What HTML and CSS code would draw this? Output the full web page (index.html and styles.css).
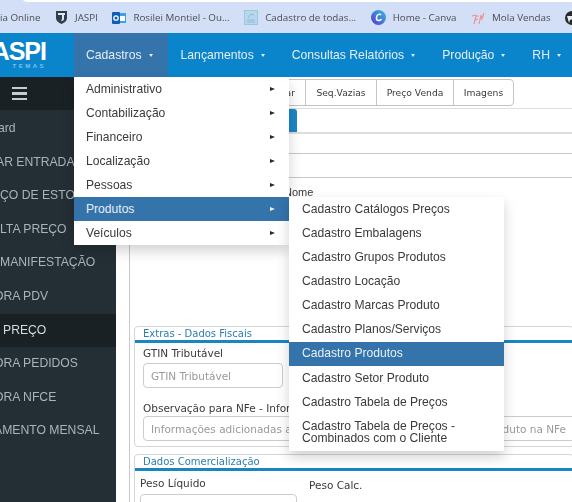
FILE: index.html
```html
<html>
<head>
    <meta charset="UTF-8">
    <title>Cadastro Produtos</title>
    <link rel="stylesheet" href="styles.css">
</head>
<body>
    <div class="bookmarks">
        <div class="urlbar"></div>
        <span class="bm first">ia Online</span>
        <span class="bm">
            <svg width="13" height="15" viewBox="0 0 13 15"><path d="M1 1h11v7c0 3-3 5-5.500 6C4 13 1 11 1 8z" fill="#2f3f4c"/><path d="M3 3h7v2H3z" fill="#dfe8f2"/><path d="M7 5h2v4c0 1-1 2-3 2l1-2z" fill="#dfe8f2"/></svg>
            JASPI
        </span>
        <span class="bm">
            <svg width="14" height="14" viewBox="0 0 14 14"><rect x="6" y="2" width="8" height="10" fill="#3ea0e8"/><rect x="8" y="5" width="5" height="5" fill="#fff"/><rect x="0" y="1" width="8" height="12" rx="1" fill="#0f5fb5"/><circle cx="4" cy="7" r="2.200" fill="none" stroke="#fff" stroke-width="1.300"/></svg>
            Rosilei Montiel - Ou...
        </span>
        <span class="bm">
            <svg width="14" height="15" viewBox="0 0 14 15"><rect x="0.500" y="0.500" width="13" height="14" fill="#b5d8ee" stroke="#9cc6e2"/><path d="M3 10h8M3 12h8M4 8l3-4 3 1" fill="none" stroke="#8fb9d6"/></svg>
            Cadastro de todas...
        </span>
        <span class="bm">
            <svg width="15" height="15" viewBox="0 0 15 15"><defs><linearGradient id="cv" x1="0" y1="1" x2="1" y2="0"><stop offset="0" stop-color="#5a32d6"/><stop offset="1" stop-color="#2fc4d8"/></linearGradient></defs><circle cx="7.500" cy="7.500" r="7.500" fill="url(#cv)"/><path d="M10 5C9 3.500 6 4 5.500 7.500 5 11 8.500 11.500 10.500 9" fill="none" stroke="#fff" stroke-width="1.500"/></svg>
            Home - Canva
        </span>
        <span class="bm">
            <svg width="14" height="14" viewBox="0 0 14 14"><path d="M3 13L5 5M5 5h3M4 9l3-1M8 13l2-9 1 4 2-6M1 5l4-1" fill="none" stroke="#ee8f8c" stroke-width="1.100"/></svg>
            Mola Vendas
        </span>
        <span class="bm">
            <svg width="14" height="14" viewBox="0 0 14 14"><circle cx="7" cy="7" r="7" fill="#2a2a2a"/><path d="M2 5h5l1 3-3 1-1 3M9 2l3 3-3 1" fill="#e8ecf6"/></svg>
        </span>
    </div>

    <div class="navbar">
        <div class="logo">
            <div class="logo-name">ASPI</div>
            <div class="logo-sub">TEMAS</div>
        </div>
        <div class="nav-item active">Cadastros <i class="caret"></i></div>
        <div class="nav-item">Lançamentos <i class="caret"></i></div>
        <div class="nav-item">Consultas Relatórios <i class="caret"></i></div>
        <div class="nav-item">Produção <i class="caret"></i></div>
        <div class="nav-item">RH <i class="caret"></i></div>
    </div>

    <div class="wrap">
        <div class="sidebar">
            <div class="side-head"><div class="burger"><span></span><span></span><span></span></div></div>
            <div class="side-item cut2">ard</div>
            <div class="side-item cut4">AR ENTRADA</div>
            <div class="side-item">ÇO DE ESTOQUE</div>
            <div class="side-item">LTA PREÇO</div>
            <div class="side-item">MANIFESTAÇÃO</div>
            <div class="side-item cut6">ORA PDV</div>
            <div class="side-item current">PREÇO</div>
            <div class="side-item cut6">ORA PEDIDOS</div>
            <div class="side-item cut6">ORA NFCE</div>
            <div class="side-item cut6">AMENTO MENSAL</div>
        </div>

        <div class="main">
            <div class="page">
                <div class="tabs">
                    <div class="tab first-tab">Alterar</div>
                    <div class="tab seq">Seq.Vazias</div>
                    <div class="tab price">Preço Venda</div>
                    <div class="tab images">Imagens</div>
                </div>
                <div class="strip"><div class="strip-btn"></div></div>
                <div class="line-row"></div>
                <div class="line-row short"></div>
                <div class="name-label">Nome</div>

                <div class="group fiscal">
                    <div class="legend">Extras - Dados Fiscais</div>
                    <div class="group-body">
                        <label>GTIN Tributável</label>
                        <input class="input gtin" placeholder="GTIN Tributável">
                        <label class="obs">Observação para NFe - Informações adicionais</label>
                        <input class="input wide" placeholder="Informações adicionadas ao final da descrição impressa para o produto na NFe">
                    </div>
                </div>

                <div class="group sale">
                    <div class="legend">Dados Comercialização</div>
                    <div class="sale-row">
                        <div class="sale-col">
                            <label>Peso Líquido</label>
                            <input class="input peso">
                        </div>
                        <label class="calc">Peso Calc.</label>
                    </div>
                </div>
            </div>
        </div>
    </div>

    <ul class="menu">
        <li>Administrativo <i class="arrow"></i></li>
        <li>Contabilização <i class="arrow"></i></li>
        <li>Financeiro <i class="arrow"></i></li>
        <li>Localização <i class="arrow"></i></li>
        <li>Pessoas <i class="arrow"></i></li>
        <li class="selected">Produtos <i class="arrow"></i>
            <ul class="menu submenu">
                <li>Cadastro Catálogos Preços</li>
                <li>Cadastro Embalagens</li>
                <li>Cadastro Grupos Produtos</li>
                <li>Cadastro Locação</li>
                <li>Cadastro Marcas Produto</li>
                <li>Cadastro Planos/Serviços</li>
                <li class="selected">Cadastro Produtos</li>
                <li>Cadastro Setor Produto</li>
                <li>Cadastro Tabela de Preços</li>
                <li>Cadastro Tabela de Preços - Combinados com o Cliente</li>
            </ul>
        </li>
        <li>Veículos <i class="arrow"></i></li>
    </ul>
</body>
</html>
```

FILE: styles.css
```css
* {
    box-sizing: border-box;
}

body {
    margin: 0;
    width: 572px;
    height: 502px;
    overflow: hidden;
    position: relative;
    background: #fff;
    font-family: "Liberation Sans", Arial, sans-serif;
    filter: blur(0.35px);
}

.bookmarks {
    height: 33px;
    background: #d3dff6;
    display: flex;
    align-items: center;
    padding-top: 2px;
    white-space: nowrap;
    position: relative;
    overflow: hidden;
    font-family: "Open Sans", sans-serif;
    font-size: 9.800px;
    color: #4a4d55;
}

.urlbar {
    position: absolute;
    left: 22px;
    top: -8px;
    width: 560px;
    height: 10px;
    background: #fff;
    border-radius: 8px;
}

.bm {
    display: flex;
    align-items: center;
    gap: 7px;
    margin-right: 14.500px;
    flex: none;
}

.navbar {
    height: 44px;
    background: #0a85cc;
    display: flex;
    align-items: stretch;
    color: #e6eef5;
    font-size: 12.200px;
    white-space: nowrap;
}

.logo {
    width: 74px;
    flex: none;
    color: #fff;
    padding-top: 8px;
    overflow: hidden;
    display: flex;
    flex-direction: column;
    align-items: flex-end;
    padding-right: 28px;
}

.logo-name {
    font-size: 25px;
    font-weight: bold;
    line-height: 20px;
    letter-spacing: -1px;
}

.logo-sub {
    font-size: 6px;
    line-height: 8px;
    margin-top: 1px;
    letter-spacing: 2.500px;
    color: #7fc0e8;
    font-weight: bold;
}

.nav-item {
    display: flex;
    flex: none;
    align-items: center;
    gap: 7px;
    padding: 0 14px 0 13px;
}

.nav-item.active {
    background: #3573ab;
    padding: 0 15px 0 12px;
}

.caret {
    width: 0;
    height: 0;
    border-left: 2.500px solid transparent;
    border-right: 2.500px solid transparent;
    border-top: 3.500px solid #e6eef5;
}

.wrap {
    display: flex;
    height: 425px;
}

.sidebar {
    width: 116px;
    flex: none;
    background: #242f35;
    color: #a9b3b8;
    font-size: 12.200px;
    white-space: nowrap;
    overflow: hidden;
}

.side-head {
    height: 33px;
    background: #1a2125;
    display: flex;
    align-items: center;
    padding-left: 12px;
    margin-bottom: 2px;
}

.burger {
    width: 15px;
    display: flex;
    flex-direction: column;
    gap: 3px;
}

.burger span {
    height: 2.500px;
    background: #c4cdd0;
}

.side-item {
    height: 33.600px;
    line-height: 33px;
}

.side-item.cut2 {
    text-indent: -2px;
}

.side-item.cut4 {
    text-indent: -4px;
}

.side-item.cut6 {
    text-indent: -6px;
}

.side-item.current {
    background: #1a2125;
    color: #d5dbde;
    padding-left: 3px;
}

.main {
    flex: 1;
    min-width: 0;
    padding-left: 13px;
    overflow: hidden;
}

.page {
    border-left: 1px solid #c8c8c8;
    height: 100%;
    padding-left: 4px;
    font-family: "DejaVu Sans", sans-serif;
    font-size: 10.500px;
    color: #3a3a3a;
}

.tabs {
    display: flex;
    height: 27px;
    margin-top: 2px;
    margin-left: 60px;
    width: 320px;
    border: 1px solid #c4c4c4;
    border-radius: 4px;
    font-size: 9.200px;
}

.tab {
    display: flex;
    align-items: center;
    justify-content: center;
    border-right: 1px solid #c4c4c4;
    white-space: nowrap;
}

.tab.first-tab {
    width: 111px;
    justify-content: flex-end;
    padding-right: 10px;
}

.tab.seq {
    width: 71px;
}

.tab.price {
    width: 77px;
}

.tab.images {
    flex: 1;
    border-right: none;
}

.strip {
    margin-left: -4px;
    margin-top: 2px;
    height: 26px;
    border-top: 1px solid #ddd;
    border-bottom: 2px solid #ddd;
    padding-left: 159px;
}

.strip-btn {
    width: 8px;
    height: 23px;
    background: #1a86c6;
    border-radius: 0 3px 0 0;
}

.line-row {
    height: 20px;
    border-bottom: 1px solid #c8c8c8;
    margin-left: -4px;
}

.line-row.short {
    height: 24px;
}

.name-label {
    font-family: "Liberation Sans", Arial, sans-serif;
    font-size: 11px;
    margin-top: 8px;
    margin-left: 150px;
}

.group {
    border: 1px solid #d5d5d5;
    border-radius: 4px;
    margin-right: -2px;
}

.legend {
    color: #2b7eb0;
    font-size: 10px;
    line-height: 13px;
    padding-left: 8px;
    border-bottom: 3px solid #1a86c0;
}

.fiscal {
    height: 121px;
    margin-top: 128px;
}

.group-body {
    padding: 4px 0 0 8px;
}

label {
    display: block;
    line-height: 13px;
    white-space: nowrap;
}

.input {
    display: block;
    height: 25px;
    border: 1px solid #ccc;
    border-radius: 4px;
    margin-top: 3px;
    padding: 0 7px;
    font-family: "DejaVu Sans", sans-serif;
    font-size: 10.500px;
    background: #fff;
}

.input::placeholder {
    color: #9a9a9a;
}

.gtin {
    width: 140px;
}

.obs {
    margin-top: 14px;
    margin-bottom: -2px;
}

.wide {
    width: 480px;
}

.sale {
    margin-top: 7px;
    height: 60px;
}

.sale-row {
    display: flex;
    padding: 6px 0 0 5px;
}

.sale-col {
    width: 157px;
}

.peso {
    width: 157px;
    margin-top: 4px;
}

.calc {
    margin: 2px 0 0 12px;
}

.menu {
    list-style: none;
    margin: 0;
    padding: 0;
    position: absolute;
    left: 74px;
    top: 77px;
    width: 215px;
    background: #fff;
    box-shadow: 0 6px 12px rgba(0, 0, 0, 0.18);
    font-size: 12.100px;
    line-height: 12px;
    color: #3a3a3a;
}

.menu li {
    padding: 6px 12px;
    position: relative;
}

.menu li.selected {
    background: #3573ab;
    color: #e8eff6;
}

.arrow {
    position: absolute;
    right: 14px;
    top: 10px;
    width: 0;
    height: 0;
    border-top: 2.500px solid transparent;
    border-bottom: 2.500px solid transparent;
    border-left: 5px solid #2a2a2a;
}

.selected > .arrow {
    border-left-color: #e8eff6;
}

.submenu {
    left: 215px;
    top: 0;
    line-height: 12.150px;
    color: #3a3a3a;
}

.submenu li {
    padding: 5.500px 13px 6.500px;
}
```
